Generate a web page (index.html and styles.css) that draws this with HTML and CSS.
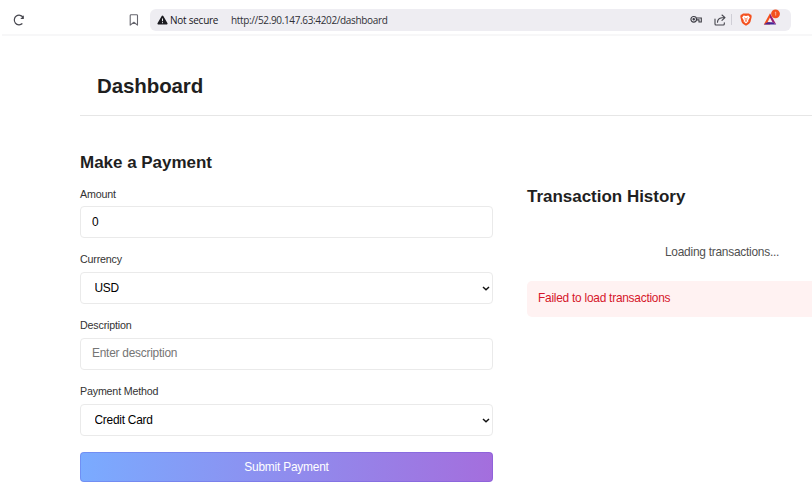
FILE: index.html
```html
<!DOCTYPE html>
<html lang="en">
<head>
<meta charset="utf-8">
<title>Dashboard</title>
<link rel="stylesheet" href="styles.css">
</head>
<body>
<div class="toolbar">
  <svg class="reload" width="14" height="14" viewBox="0 0 14 14" fill="none" stroke="#45454d" stroke-width="1.2"><path d="M10.4 10.500A4.800 4.800 0 1 1 11.200 4.500"/><path d="M11.800 2.300v3.600H8.300z" fill="#45454d" stroke="none"/></svg>
  <svg class="bookmark" width="10" height="12" viewBox="0 0 10 12" fill="none" stroke="#66666e" stroke-width="1.1" stroke-linejoin="round"><path d="M1.200 1.600Q1.200.7 2.100.7h5.500q.9 0 .9.9v9.500L4.900 8.300 1.200 11.100z"/></svg>
  <div class="address">
    <svg class="warning" width="11" height="10" viewBox="0 0 11 10"><path d="M5.500.4Q6 .4 6.300 1l4.200 7.300q.4 1-.6 1.100H1.100Q.1 9.300.5 8.300L4.700 1Q5 .4 5.500.4z" fill="#1b1b20"/><path d="M5.500 3.500v2.700M5.500 7.200v1" stroke="#eeedf2" stroke-width="1"/></svg>
    <span class="secure">Not secure</span>
    <span class="url">http://52.90.147.63:4202/dashboard</span>
    <svg class="key" width="13" height="9" viewBox="0 0 13 9" fill="none" stroke="#3c3c44" stroke-width="1.1"><circle cx="3.700" cy="4.300" r="2.800"/><circle cx="3.700" cy="4.300" r=".7" fill="#3c3c44"/><path d="M6.300 3h5v4H9V4.900H6.300"/></svg>
    <svg class="share" width="12" height="12" viewBox="0 0 12 12" fill="none" stroke="#45454d" stroke-width="1.1" stroke-linecap="round" stroke-linejoin="round"><path d="M1 5v5q0 1 1 1h7.300q1 0 1-1V8.800M3.500 8.300Q3.600 4.200 8 3.700h2.500M8 1l3 2.700L8 6.300"/></svg>
    <span class="divider"></span>
    <svg class="shield" width="12" height="13" viewBox="0 0 12 13"><path d="M3 .4h6l1.100 1.200 1.200.2.4 2-1.200 5Q10 10 8.800 10.900L6 12.800 3.200 10.900Q2 10 1.500 8.800L.3 3.800l.4-2 1.200-.2z" fill="#f4501e"/><path d="M3.600 2.600 6 3l2.400-.4 1.500 1.800-1.700 2.900.2 1.200L6 10.600 3.600 8.500l.2-1.200L2.100 4.400z" fill="#fff"/><path d="m4 4.700 1.500.8L5 7l1 .7L7 7l-.5-1.500L8 4.700M4.700 8.600 6 8l1.300.6" fill="none" stroke="#f4501e" stroke-width=".6"/></svg>
    <svg class="rewards" width="18" height="18" viewBox="0 0 18 18"><path d="M7 4.200 .8 15.500h6.300v-2.200H4.500L7 8.500z" fill="#f4501e"/><path d="m7 4.200 6.200 11.300-3.700-2.200L7 8.500z" fill="#9b1c70"/><path d="M.8 15.500h12.400l-3.700-2.200H4.500z" fill="#442596"/><circle cx="12.500" cy="4.800" r="4.400" fill="#f4501e"/><path d="M11.800 3.600l.9-.6v3.600" fill="none" stroke="#ffd4c5" stroke-width=".7"/></svg>
  </div>
</div>
<header class="header"><h1>Dashboard</h1></header>
<main class="content">
  <form class="payment">
    <h2>Make a Payment</h2>
    <div class="field"><label for="amount">Amount</label><input id="amount" type="text" value="0"></div>
    <div class="field"><label for="currency">Currency</label>
      <div class="select"><select id="currency"><option>USD</option></select><svg class="arrow" width="8" height="5" viewBox="0 0 8 5"><path d="m1 1 3 2.700L7 1" fill="none" stroke="#111" stroke-width="1.500"/></svg></div></div>
    <div class="field"><label for="description">Description</label><input id="description" type="text" placeholder="Enter description"></div>
    <div class="field"><label for="method">Payment Method</label>
      <div class="select"><select id="method"><option>Credit Card</option></select><svg class="arrow" width="8" height="5" viewBox="0 0 8 5"><path d="m1 1 3 2.700L7 1" fill="none" stroke="#111" stroke-width="1.500"/></svg></div></div>
    <button type="button">Submit Payment</button>
  </form>
  <section class="history">
    <h2>Transaction History</h2>
    <p class="loading">Loading transactions...</p>
    <p class="error">Failed to load transactions</p>
  </section>
</main>
</body>
</html>
```
FILE: styles.css
```css
* { box-sizing: border-box; }
body {
  margin: 0;
  height: 500px;
  overflow: hidden;
  background: #fff;
  color: #1f1f1f;
  font-family: "Liberation Sans", Arial, sans-serif;
  font-size: 11.9px;
  letter-spacing: -.24px;
}
svg { display: block; flex: none; }
h1, h2, p { margin: 0; }
.toolbar {
  display: flex;
  align-items: center;
  height: 36px;
  margin-left: 2px;
  padding: 5px 21px 0 10px;
  border-bottom: 2px solid #f7f7f8;
}
.bookmark { margin-left: 103px; }
.address {
  display: flex;
  align-items: center;
  flex: 1;
  height: 22px;
  margin-left: 11px;
  padding-left: 7px;
  border-radius: 6px;
  background: #eeedf2;
  color: #303036;
  font-family: "Open Sans", sans-serif;
  font-size: 10px;
  letter-spacing: -.35px;
  white-space: nowrap;
}
.secure { width: 61px; margin-left: 2px; color: #17171b; letter-spacing: -.25px; }
.url { flex: 1; }
.share { margin-left: 11px; }
.divider { width: 1px; height: 11px; margin-left: 5px; background: #cfced6; }
.shield { margin-left: 8px; }
.rewards { margin: -3px 10px 0 11px; }
.header {
  height: 80px;
  margin-left: 80px;
  padding: 37px 17px 0;
  border-bottom: 1px solid #e6e6e6;
}
h1 { font-size: 20.5px; line-height: 25px; letter-spacing: -.1px; }
h2 { font-size: 17px; line-height: 22px; }
.payment h2, .history h2 { letter-spacing: -.02px; }
.content {
  display: grid;
  grid-template-columns: 413px minmax(0, 1fr);
  column-gap: 34px;
  padding: 36px 0 0 80px;
}
.payment h2 { margin-bottom: 11.5px; }
.field { height: 65.8px; }
label { display: block; height: 20.7px; padding-top: 1px; font-size: 10.7px; line-height: 15px; letter-spacing: -.18px; color: #333; }
input, select {
  display: block;
  width: 100%;
  height: 32px;
  padding: 0 11px 1px;
  border: 1px solid #eaeaea;
  border-radius: 4px;
  background: #fff;
  color: #000;
  font: 11.9px "Liberation Sans", Arial, sans-serif;
  letter-spacing: -.24px;
}
input::placeholder { color: #757575; }
select { padding: 0 13.5px; appearance: none; }
.select { position: relative; }
.arrow { position: absolute; right: 3px; top: 14px; }
button {
  display: block;
  width: 100%;
  height: 30px;
  margin-top: 3px;
  padding: 0;
  border: 1px solid rgba(85, 65, 210, .25);
  border-radius: 4px;
  background: linear-gradient(90deg, #7aabff, #a46edd) border-box;
  color: #fff;
  font: 11.9px "Liberation Sans", Arial, sans-serif;
  letter-spacing: -.2px;
}
.history { padding-top: 34px; }
.loading {
  margin-top: 32.5px;
  padding-left: 138px;
  line-height: 22px;
  color: #505050;
}
.error {
  height: 36px;
  margin-top: 18.5px;
  padding-left: 11px;
  border-radius: 5px 0 0 5px;
  background: #fff2f2;
  color: #d6172b;
  line-height: 35px;
}
```
